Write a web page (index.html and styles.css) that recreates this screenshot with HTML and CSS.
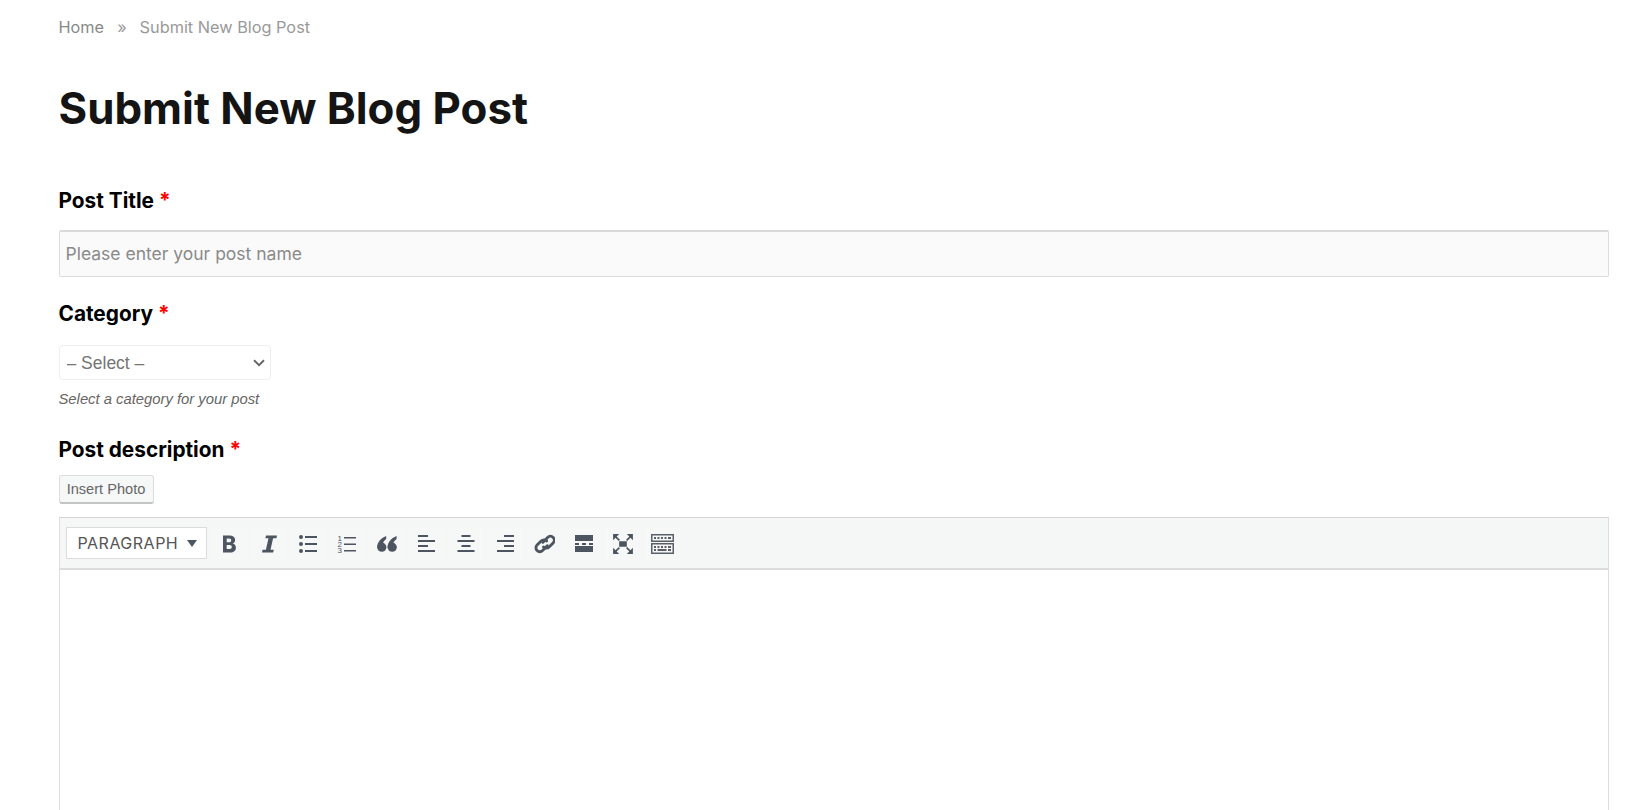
FILE: index.html
```html
<!DOCTYPE html>
<html lang="en">
<head>
    <meta charset="utf-8">
    <title>Submit New Blog Post</title>
    <link rel="stylesheet" href="styles.css">
</head>
<body>
<div class="page">
    <div class="breadcrumb">
        <a href="#">Home</a>
        <span class="sep">»</span>
        <span>Submit New Blog Post</span>
    </div>
    <h1 class="title">Submit New Blog Post</h1>

    <form class="form">
        <label class="label label-title">Post Title <span class="req">*</span></label>
        <input class="text-input" type="text" placeholder="Please enter your post name">

        <label class="label label-category">Category <span class="req">*</span></label>
        <select class="select">
            <option>– Select –</option>
        </select>
        <p class="hint">Select a category for your post</p>

        <label class="label label-desc">Post description <span class="req">*</span></label>
        <button type="button" class="photo-btn">Insert Photo</button>

        <div class="editor">
            <div class="toolbar">
                <div class="format">PARAGRAPH<span class="caret"></span></div>
                <!-- bold -->
                <span class="tool"><svg viewBox="0 0 20 20"><path fill-rule="evenodd" d="M4 1.500h6.700c3.300 0 5.400 1.600 5.400 4.400 0 1.700-.9 3-2.400 3.600 2 .5 3.200 2.100 3.200 4.200 0 3-2.300 4.800-5.700 4.800H4zm3.700 3.100v3.600h2.500c1.300 0 2-.7 2-1.800s-.7-1.800-2-1.800zm0 6.500v3.800h2.900c1.500 0 2.200-.7 2.200-1.900s-.8-1.900-2.200-1.900z"/></svg></span>
                <!-- italic -->
                <span class="tool"><svg viewBox="0 0 20 20"><path d="M7 1.500h11l-.6 2.800h-3.300L11.500 15.700h3.300l-.6 2.800H3l.6-2.800h3.300L9.500 4.300H6.400z"/></svg></span>
                <!-- bullet list -->
                <span class="tool"><svg viewBox="0 0 20 20"><circle cx="3" cy="3" r="2"/><circle cx="3" cy="10" r="2"/><circle cx="3" cy="17" r="2"/><path d="M7 2h12v2H7zM7 9h12v2H7zM7 16h12v2H7z"/></svg></span>
                <!-- numbered list -->
                <span class="tool"><svg viewBox="0 0 20 20"><path d="M7 3h12v1.500H7zM7 9.500h12V11H7zM7 16h12v1.500H7z"/><text class="num" x="0.500" y="6.500">1</text><text class="num" x="0.500" y="12.800">2</text><text class="num" x="0.500" y="19">3</text></svg></span>
                <!-- quote -->
                <span class="tool"><svg viewBox="0 0 20 20"><circle cx="4.800" cy="13.200" r="4.600"/><circle cx="15.200" cy="13.200" r="4.600"/><path d="M9.200 2C3.500 4.200.2 8.500.2 13.200h4.600c0-3.200 1.600-6 4.400-8.300zM19.600 2C13.900 4.200 10.600 8.500 10.600 13.200h4.600c0-3.200 1.600-6 4.400-8.300z"/></svg></span>
                <!-- align left -->
                <span class="tool"><svg viewBox="0 0 20 20"><path d="M2 1h10v2H2zM2 6h17v2H2zM2 11h10v2H2zM2 16h17v2H2z"/></svg></span>
                <!-- align center -->
                <span class="tool"><svg viewBox="0 0 20 20"><path d="M5.500 1h9v2h-9zM1.500 6h17v2h-17zM5.500 11h9v2h-9zM1.500 16h17v2h-17z"/></svg></span>
                <!-- align right -->
                <span class="tool"><svg viewBox="0 0 20 20"><path d="M9 1h10v2H9zM2 6h17v2H2zM9 11h10v2H9zM2 16h17v2H2z"/></svg></span>
                <!-- link -->
                <span class="tool"><svg class="icon-big" viewBox="0 0 20 20"><g fill="none" stroke="#4d5560" stroke-width="2.600" stroke-linecap="round" transform="translate(1 0)"><path d="M8 8.500l4.300-4.500a3.500 3.500 0 0 1 5 5l-3.700 3.700a3.500 3.500 0 0 1-5 0"/><path d="M12 11.500l-4.300 4.500a3.500 3.500 0 0 1-5-5l3.700-3.700a3.500 3.500 0 0 1 5 0"/></g></svg></span>
                <!-- read more -->
                <span class="tool"><svg viewBox="0 0 20 20"><path d="M1 1h18v6H1zM1 12h18v6H1zM1 9h4v2H1zM8 9h4v2H8zM15 9h4v2h-4z"/></svg></span>
                <!-- fullscreen -->
                <span class="tool"><svg class="icon-big" viewBox="0 0 20 20"><path d="M6.500 7.500h7v5h-7zM1 1h5.500L1 6.500zM19 1h-5.500L19 6.500zM1 19h5.500L1 13.500zM19 19h-5.500l5.500-5.500z"/><path d="M3 3l3.700 3.700M17 3l-3.700 3.700M3 17l3.700-3.700M17 17l-3.700-3.700" fill="none" stroke="#4d5560" stroke-width="1.500"/></svg></span>
                <!-- toolbar toggle -->
                <span class="tool"><svg class="icon-kitchen" viewBox="0 0 23 20"><g fill="none" stroke="#5b6068" stroke-width="1.500"><rect x=".75" y=".75" width="21.500" height="6.500"/><rect x=".75" y="9.750" width="21.500" height="9.500"/></g><path d="M3 3h2v2H3zM6.500 3h2v2h-2zM10 3h2v2h-2zM13.500 3h2v2h-2zM17 3h3v2h-3zM3 12h2v2H3zM6.500 12h2v2h-2zM10 12h2v2h-2zM13.500 12h2v2h-2zM17 12h3v2h-3zM3 15h2v2H3zM6.500 15h9v2h-9zM17 15h3v2h-3z" fill="#5b6068"/></svg></span>
            </div>
            <div class="editor-body"></div>
        </div>
    </form>
</div>
</body>
</html>
```

FILE: styles.css
```css
html, body {
    margin: 0;
    height: 100%;
    overflow: hidden;
    background: #fff;
}

body {
    font-family: Inter, "Noto Sans", sans-serif;
}

.page {
    padding: 16px 23px 0 58.500px;
}

.breadcrumb {
    display: flex;
    font-size: 16.300px;
    line-height: 22px;
    color: #999;
}

.breadcrumb a {
    color: #888;
    text-decoration: none;
}

.breadcrumb .sep {
    margin: 0 13px;
}

.title {
    margin: 44px 0 0;
    font-size: 43.800px;
    line-height: 54px;
    font-weight: 700;
    color: #141414;
}

.form {
    display: flex;
    flex-direction: column;
    align-items: flex-start;
}

.label {
    font-size: 20.800px;
    line-height: 28px;
    font-weight: 700;
    color: #000;
}

.req {
    color: #f00;
}

.label-title {
    margin-top: 51px;
}

.text-input {
    box-sizing: border-box;
    width: 100%;
    height: 47px;
    margin-top: 15px;
    padding: 0 6px 1px;
    border: 1px solid #ddd;
    border-top: 2px solid #dadada;
    border-radius: 2px;
    background: #fafafa;
    font-family: Inter, sans-serif;
    font-size: 17.500px;
    color: #333;
}

.text-input::placeholder {
    color: #8a8a8a;
    opacity: 1;
}

.label-category {
    margin-top: 23px;
}

.select {
    box-sizing: border-box;
    width: 212px;
    height: 35px;
    margin-top: 17px;
    padding: 0 7px;
    border: 1px solid #eee;
    border-radius: 4px;
    appearance: none;
    background: #fff url("data:image/svg+xml,%3Csvg xmlns='http://www.w3.org/2000/svg' width='12' height='8'%3E%3Cpath d='M1 1.200l5 5 5-5' fill='none' stroke='%23666' stroke-width='2'/%3E%3C/svg%3E") no-repeat right 5px center;
    font-family: "Liberation Sans", Arial, sans-serif;
    font-size: 17.500px;
    color: #757575;
}

.hint {
    margin: 10px 0 0;
    font-family: "Liberation Sans", Arial, sans-serif;
    font-style: italic;
    font-size: 14.800px;
    line-height: 18px;
    color: #666;
}

.label-desc {
    margin-top: 28px;
}

.photo-btn {
    box-sizing: border-box;
    width: 95px;
    height: 29px;
    margin-top: 11px;
    padding: 0;
    border: 1px solid #ddd;
    border-bottom: 2px solid #c4c4c4;
    border-radius: 3px;
    background: #f6f7f7;
    font-family: "Liberation Sans", Arial, sans-serif;
    font-size: 14.600px;
    color: #666;
}

.editor {
    width: 100%;
    height: 400px;
    margin-top: 13px;
    box-sizing: border-box;
    border: 1px solid #ddd;
    border-top-color: #d5d5d5;
}

.toolbar {
    display: flex;
    align-items: center;
    height: 52px;
    padding-left: 6px;
    background: #f5f6f6;
    border-bottom: 2px solid #dcdcdc;
    box-sizing: border-box;
}

.format {
    display: flex;
    align-items: center;
    justify-content: space-between;
    box-sizing: border-box;
    width: 141px;
    height: 32px;
    margin-right: 5px;
    padding: 0 9px 0 11px;
    background: #fff;
    border: 1px solid #dcdcdc;
    font-size: 16px;
    letter-spacing: .5px;
    color: #555;
}

.caret {
    border-left: 5px solid transparent;
    border-right: 5px solid transparent;
    border-top: 7px solid #4d5560;
}

.tool {
    display: flex;
    align-items: center;
    justify-content: center;
    flex: none;
    width: 35.400px;
    height: 34px;
    margin-top: 1px;
    margin-right: 4px;
    border-radius: 3px;
    background: #f6f7f7;
}

.tool svg {
    width: 20px;
    height: 20px;
    fill: #4d5560;
}

.tool .icon-big {
    width: 22px;
    height: 22px;
}

.tool .icon-kitchen {
    width: 23px;
    height: 20px;
}

.num {
    font-family: "Liberation Sans", sans-serif;
    font-size: 8px;
    fill: #4d5560;
}
```
